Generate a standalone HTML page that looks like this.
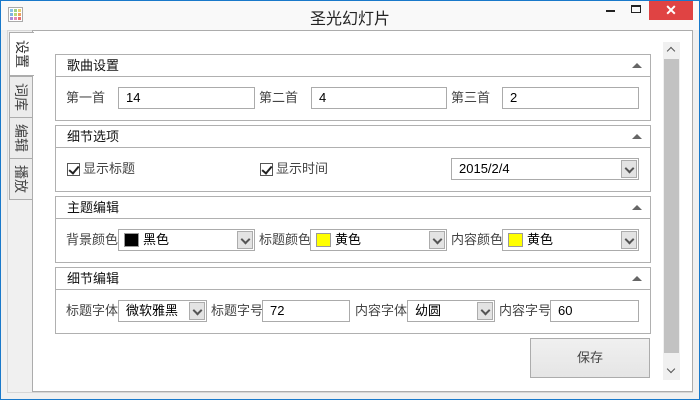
<!DOCTYPE html>
<html><head><meta charset="utf-8"><style>
*{box-sizing:border-box;margin:0;padding:0}
body{width:700px;height:400px;overflow:hidden;background:#f0f0f0;font-family:"Liberation Sans","Noto Sans CJK SC",sans-serif;font-size:13px;color:#333;position:relative}
.a{position:absolute}
.win{left:0;top:0;width:700px;height:400px;border:1px solid #1979ca}
.tb{left:1px;top:1px;width:698px;height:29px;background:#f9f9f9}
.lbl{position:absolute;line-height:20px;color:#444}
.in{position:absolute;height:22px;border:1px solid #ababab;background:#fff;line-height:20px;padding-left:7px;color:#000}
.dd{position:absolute;right:1px;top:1px;width:16px;height:18px;border:1px solid #acacac;background:#e3e3e3}
.dd:after{content:"";position:absolute;left:4px;top:4px;width:5px;height:5px;border-right:2px solid #555;border-bottom:2px solid #555;transform:rotate(45deg)}
.grp{position:absolute;left:55px;width:596px;height:67px;border:1px solid #b0b0b0;background:#fff}
.grp .h{position:absolute;left:0;top:0;width:100%;height:22px;border-bottom:1px solid #b0b0b0;padding-left:11px;line-height:21px;color:#111}
.grp .h:after{content:"";position:absolute;right:8px;top:8px;border-left:5px solid transparent;border-right:5px solid transparent;border-bottom:5px solid #666}
.sw{position:absolute;left:5px;top:3px;width:15px;height:14px;border:1px solid #999}
.cb{position:absolute;width:13px;height:13px;border:1px solid #555;background:#fff}
.cb:after{content:"";position:absolute;left:3px;top:0px;width:4px;height:8px;border-right:2px solid #222;border-bottom:2px solid #222;transform:rotate(40deg)}
.tab{position:absolute;left:9px;width:24px;border:1px solid #acacac;background:#ececec;color:#444}
.tab span{position:absolute;left:50%;top:50%;transform:translate(-50%,-50%) rotate(90deg);white-space:nowrap;font-size:14px}
</style></head><body>
<div class="a win"></div>
<div class="a tb"></div>
<svg class="a" style="left:8px;top:7px" width="15" height="15"><rect x="0.5" y="0.5" width="14" height="14" fill="#fff" stroke="#aaa"/><rect x="2" y="2" width="3" height="3" fill="#8bc3e8"/><rect x="6" y="2" width="3" height="3" fill="#9fd08a"/><rect x="10" y="2" width="3" height="3" fill="#e8d06b"/><rect x="2" y="6" width="3" height="3" fill="#7fb5e0"/><rect x="6" y="6" width="3" height="3" fill="#b8d778"/><rect x="10" y="6" width="3" height="3" fill="#f0a060"/><rect x="2" y="10" width="3" height="3" fill="#a88ad8"/><rect x="6" y="10" width="3" height="3" fill="#e28ab8"/><rect x="10" y="10" width="3" height="3" fill="#e87070"/></svg>
<div class="a" style="left:0;top:5px;width:700px;text-align:center;font-size:16px;color:#222">圣光幻灯片</div>
<div class="a" style="left:606px;top:10px;width:9px;height:2px;background:#222"></div>
<div class="a" style="left:631px;top:5px;width:10px;height:8px;border:1px solid #222;border-top-width:2px"></div>
<div class="a" style="left:649px;top:1px;width:44px;height:19px;background:#e04343;color:#fff;text-align:center;font-size:14px;line-height:19px;font-weight:bold">✕</div>
<div class="a" style="left:7px;top:30px;width:686px;height:363px;border:1px solid #d6d6d6"></div>
<div class="a" style="left:32px;top:30px;width:661px;height:362px;border:1px solid #acacac;background:#fff"></div>
<div class="tab" style="top:32px;height:44px;background:#fff;border-right:none;width:25px"><span style="color:#333">设置</span></div>
<div class="tab" style="top:76px;height:42px"><span>词库</span></div>
<div class="tab" style="top:117px;height:42px"><span>编辑</span></div>
<div class="tab" style="top:158px;height:42px"><span>播放</span></div>
<div class="a" style="left:663px;top:42px;width:17px;height:338px;background:#f0f0f0"></div>
<div class="a" style="left:664px;top:59px;width:15px;height:294px;background:#c2c2c2"></div>
<div class="a" style="left:668px;top:48px;width:6px;height:6px;border-left:1.5px solid #555;border-top:1.5px solid #555;transform:rotate(45deg)"></div>
<div class="a" style="left:668px;top:366px;width:6px;height:6px;border-right:1.5px solid #555;border-bottom:1.5px solid #555;transform:rotate(45deg)"></div>

<div class="grp" style="top:54px"><div class="h">歌曲设置</div></div>
<div class="lbl" style="left:66px;top:88px">第一首</div><div class="in" style="left:118px;top:87px;width:137px">14</div>
<div class="lbl" style="left:259px;top:88px">第二首</div><div class="in" style="left:311px;top:87px;width:136px">4</div>
<div class="lbl" style="left:451px;top:88px">第三首</div><div class="in" style="left:502px;top:87px;width:137px">2</div>

<div class="grp" style="top:125px"><div class="h">细节选项</div></div>
<div class="cb" style="left:67px;top:163px"></div><div class="lbl" style="left:83px;top:159px">显示标题</div>
<div class="cb" style="left:260px;top:163px"></div><div class="lbl" style="left:276px;top:159px">显示时间</div>
<div class="in" style="left:451px;top:158px;width:188px">2015/2/4<div class="dd"></div></div>

<div class="grp" style="top:196px"><div class="h">主题编辑</div></div>
<div class="lbl" style="left:66px;top:230px">背景颜色</div><div class="in" style="left:118px;top:229px;width:137px;padding-left:24px"><div class="sw" style="background:#000"></div>黑色<div class="dd"></div></div>
<div class="lbl" style="left:259px;top:230px">标题颜色</div><div class="in" style="left:310px;top:229px;width:137px;padding-left:24px"><div class="sw" style="background:#ff0"></div>黄色<div class="dd"></div></div>
<div class="lbl" style="left:451px;top:230px">内容颜色</div><div class="in" style="left:502px;top:229px;width:137px;padding-left:24px"><div class="sw" style="background:#ff0"></div>黄色<div class="dd"></div></div>

<div class="grp" style="top:267px"><div class="h">细节编辑</div></div>
<div class="lbl" style="left:66px;top:301px">标题字体</div><div class="in" style="left:118px;top:300px;width:89px">微软雅黑<div class="dd"></div></div>
<div class="lbl" style="left:211px;top:301px">标题字号</div><div class="in" style="left:262px;top:300px;width:88px">72</div>
<div class="lbl" style="left:355px;top:301px">内容字体</div><div class="in" style="left:407px;top:300px;width:88px">幼圆<div class="dd"></div></div>
<div class="lbl" style="left:499px;top:301px">内容字号</div><div class="in" style="left:550px;top:300px;width:89px">60</div>

<div class="a" style="left:530px;top:338px;width:120px;height:40px;border:1px solid #acacac;background:linear-gradient(#f0f0f0,#e5e5e5);text-align:center;line-height:38px;color:#444">保存</div>
</body></html>
